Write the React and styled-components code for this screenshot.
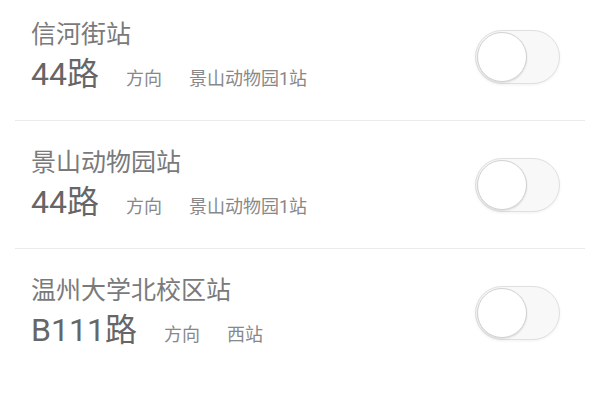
import React, { useState } from "react"
import styled, { createGlobalStyle } from "styled-components"

const GlobalStyle = createGlobalStyle`
    body {
        margin: 0;
        background: #ffffff;
        font-family: Roboto, "Noto Sans CJK SC", sans-serif;
    }
`

const List = styled.div`
    display: flex;
    flex-direction: column;
    margin-top: -7px;
`

const Row = styled.div`
    display: flex;
    align-items: center;
    justify-content: space-between;
    height: 127px;
    margin: 0 15px;
    padding: 0 25px 0 16px;
    border-bottom: 1px solid #ebebeb;
    box-sizing: content-box;

    &:last-child {
        border-bottom-color: transparent;
    }
`

const Info = styled.div`
    display: flex;
    flex-direction: column;
    gap: 4px;
    padding-top: 6px;
`

const StationName = styled.div`
    font-size: 25px;
    line-height: 30px;
    color: #7a7a7a;
`

const RouteLine = styled.div`
    display: flex;
    align-items: baseline;
    line-height: 40px;
`

const RouteName = styled.span`
    font-size: 32px;
    color: #666666;
    margin-right: 27px;
`

const Small = styled.span`
    font-size: 18px;
    color: #888888;
    margin-right: 27px;
`

const Track = styled.button`
    position: relative;
    width: 85px;
    height: 54px;
    padding: 0;
    border-radius: 27px;
    border: 1px solid #e0e0e0;
    background: ${(props) => (props.on ? "#8fd18f" : "#f8f8f8")};
    box-shadow: 0 1px 3px rgba(0, 0, 0, 0.06);
    cursor: pointer;
`

const Knob = styled.span`
    position: absolute;
    top: 1px;
    left: ${(props) => (props.on ? "33px" : "1px")};
    width: 48px;
    height: 48px;
    border-radius: 50%;
    background: #ffffff;
    border: 1px solid #d2d2d2;
    box-shadow: 0 1px 2px rgba(0, 0, 0, 0.12);
`

const stops = [
    { name: "信河街站", route: "44路", to: "景山动物园1站" },
    { name: "景山动物园站", route: "44路", to: "景山动物园1站" },
    { name: "温州大学北校区站", route: "B111路", to: "西站" },
]

const Toggle = () => {
    const [on, setOn] = useState(false)
    return (
        <Track on={on ? 1 : 0} onClick={() => setOn(!on)}>
            <Knob on={on ? 1 : 0} />
        </Track>
    )
}

const App = () => {
    return (
        <>
            <GlobalStyle />
            <List>
                {stops.map((s) => (
                    <Row key={s.name}>
                        <Info>
                            <StationName>{s.name}</StationName>
                            <RouteLine>
                                <RouteName>{s.route}</RouteName>
                                <Small>方向</Small>
                                <Small>{s.to}</Small>
                            </RouteLine>
                        </Info>
                        <Toggle />
                    </Row>
                ))}
            </List>
        </>
    )
}

export default App
